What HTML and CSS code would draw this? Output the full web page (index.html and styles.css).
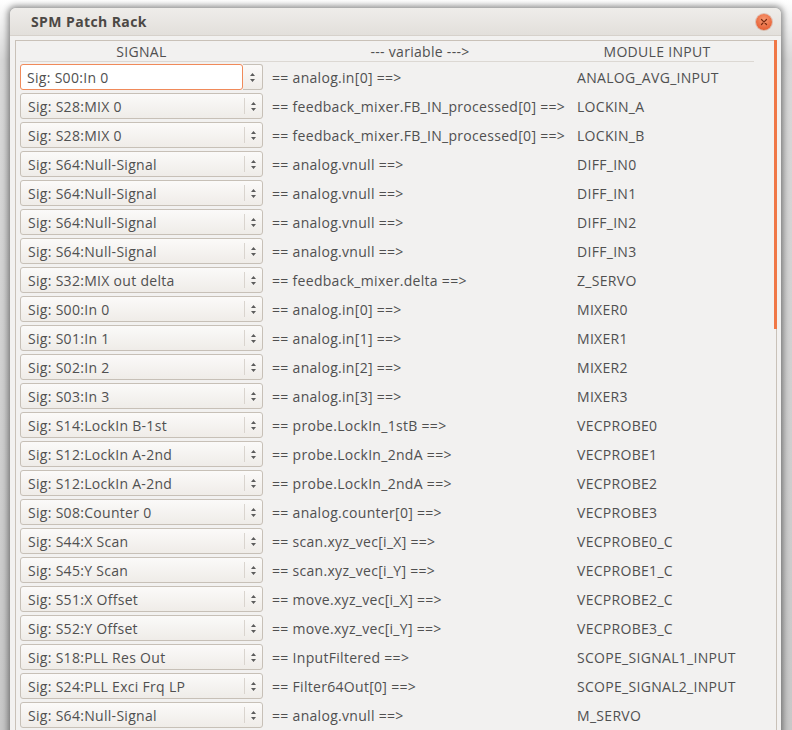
FILE: index.html
```html
<!DOCTYPE html>
<html>
<head>
<meta charset="utf-8">
<link rel="stylesheet" href="styles.css">
</head>
<body>
<div class="window">
  <div class="titlebar">
    <span class="title">SPM Patch Rack</span>
    <span class="close"><svg width="8" height="8" viewBox="0 0 8 8"><path d="M1.5 1.5 L6.5 6.5 M6.5 1.5 L1.5 6.5" stroke="#7a2a10" stroke-width="1.2" stroke-linecap="round"/></svg></span>
  </div>
  <div class="content">
    <div class="frame">
      <div class="scrollind"></div>
      <div class="header">
        <div class="h">SIGNAL</div>
        <div class="h">--- variable ---&gt;</div>
        <div class="h">MODULE INPUT</div>
      </div>
      <div class="rows" id="rows">
        <div class="combo focus"><span class="entry">Sig: S00:In 0</span><span class="spin"><svg width="7" height="11" viewBox="0 0 7 11"><path d="M3.5 1 L6 4 L1 4 Z M3.5 10 L6 7 L1 7 Z" fill="#5c5c5c"/></svg></span></div>
        <div class="var">== analog.in[0] ==&gt;</div><div class="mod">ANALOG_AVG_INPUT</div>

        <div class="combo"><span class="entry">Sig: S28:MIX 0</span><span class="spin"><svg width="7" height="11" viewBox="0 0 7 11"><path d="M3.5 1 L6 4 L1 4 Z M3.5 10 L6 7 L1 7 Z" fill="#5c5c5c"/></svg></span></div>
        <div class="var">== feedback_mixer.FB_IN_processed[0] ==&gt;</div><div class="mod">LOCKIN_A</div>

        <div class="combo"><span class="entry">Sig: S28:MIX 0</span><span class="spin"><svg width="7" height="11" viewBox="0 0 7 11"><path d="M3.5 1 L6 4 L1 4 Z M3.5 10 L6 7 L1 7 Z" fill="#5c5c5c"/></svg></span></div>
        <div class="var">== feedback_mixer.FB_IN_processed[0] ==&gt;</div><div class="mod">LOCKIN_B</div>

        <div class="combo"><span class="entry">Sig: S64:Null-Signal</span><span class="spin"><svg width="7" height="11" viewBox="0 0 7 11"><path d="M3.5 1 L6 4 L1 4 Z M3.5 10 L6 7 L1 7 Z" fill="#5c5c5c"/></svg></span></div>
        <div class="var">== analog.vnull ==&gt;</div><div class="mod">DIFF_IN0</div>

        <div class="combo"><span class="entry">Sig: S64:Null-Signal</span><span class="spin"><svg width="7" height="11" viewBox="0 0 7 11"><path d="M3.5 1 L6 4 L1 4 Z M3.5 10 L6 7 L1 7 Z" fill="#5c5c5c"/></svg></span></div>
        <div class="var">== analog.vnull ==&gt;</div><div class="mod">DIFF_IN1</div>

        <div class="combo"><span class="entry">Sig: S64:Null-Signal</span><span class="spin"><svg width="7" height="11" viewBox="0 0 7 11"><path d="M3.5 1 L6 4 L1 4 Z M3.5 10 L6 7 L1 7 Z" fill="#5c5c5c"/></svg></span></div>
        <div class="var">== analog.vnull ==&gt;</div><div class="mod">DIFF_IN2</div>

        <div class="combo"><span class="entry">Sig: S64:Null-Signal</span><span class="spin"><svg width="7" height="11" viewBox="0 0 7 11"><path d="M3.5 1 L6 4 L1 4 Z M3.5 10 L6 7 L1 7 Z" fill="#5c5c5c"/></svg></span></div>
        <div class="var">== analog.vnull ==&gt;</div><div class="mod">DIFF_IN3</div>

        <div class="combo"><span class="entry">Sig: S32:MIX out delta</span><span class="spin"><svg width="7" height="11" viewBox="0 0 7 11"><path d="M3.5 1 L6 4 L1 4 Z M3.5 10 L6 7 L1 7 Z" fill="#5c5c5c"/></svg></span></div>
        <div class="var">== feedback_mixer.delta ==&gt;</div><div class="mod">Z_SERVO</div>

        <div class="combo"><span class="entry">Sig: S00:In 0</span><span class="spin"><svg width="7" height="11" viewBox="0 0 7 11"><path d="M3.5 1 L6 4 L1 4 Z M3.5 10 L6 7 L1 7 Z" fill="#5c5c5c"/></svg></span></div>
        <div class="var">== analog.in[0] ==&gt;</div><div class="mod">MIXER0</div>

        <div class="combo"><span class="entry">Sig: S01:In 1</span><span class="spin"><svg width="7" height="11" viewBox="0 0 7 11"><path d="M3.5 1 L6 4 L1 4 Z M3.5 10 L6 7 L1 7 Z" fill="#5c5c5c"/></svg></span></div>
        <div class="var">== analog.in[1] ==&gt;</div><div class="mod">MIXER1</div>

        <div class="combo"><span class="entry">Sig: S02:In 2</span><span class="spin"><svg width="7" height="11" viewBox="0 0 7 11"><path d="M3.5 1 L6 4 L1 4 Z M3.5 10 L6 7 L1 7 Z" fill="#5c5c5c"/></svg></span></div>
        <div class="var">== analog.in[2] ==&gt;</div><div class="mod">MIXER2</div>

        <div class="combo"><span class="entry">Sig: S03:In 3</span><span class="spin"><svg width="7" height="11" viewBox="0 0 7 11"><path d="M3.5 1 L6 4 L1 4 Z M3.5 10 L6 7 L1 7 Z" fill="#5c5c5c"/></svg></span></div>
        <div class="var">== analog.in[3] ==&gt;</div><div class="mod">MIXER3</div>

        <div class="combo"><span class="entry">Sig: S14:LockIn B-1st</span><span class="spin"><svg width="7" height="11" viewBox="0 0 7 11"><path d="M3.5 1 L6 4 L1 4 Z M3.5 10 L6 7 L1 7 Z" fill="#5c5c5c"/></svg></span></div>
        <div class="var">== probe.LockIn_1stB ==&gt;</div><div class="mod">VECPROBE0</div>

        <div class="combo"><span class="entry">Sig: S12:LockIn A-2nd</span><span class="spin"><svg width="7" height="11" viewBox="0 0 7 11"><path d="M3.5 1 L6 4 L1 4 Z M3.5 10 L6 7 L1 7 Z" fill="#5c5c5c"/></svg></span></div>
        <div class="var">== probe.LockIn_2ndA ==&gt;</div><div class="mod">VECPROBE1</div>

        <div class="combo"><span class="entry">Sig: S12:LockIn A-2nd</span><span class="spin"><svg width="7" height="11" viewBox="0 0 7 11"><path d="M3.5 1 L6 4 L1 4 Z M3.5 10 L6 7 L1 7 Z" fill="#5c5c5c"/></svg></span></div>
        <div class="var">== probe.LockIn_2ndA ==&gt;</div><div class="mod">VECPROBE2</div>

        <div class="combo"><span class="entry">Sig: S08:Counter 0</span><span class="spin"><svg width="7" height="11" viewBox="0 0 7 11"><path d="M3.5 1 L6 4 L1 4 Z M3.5 10 L6 7 L1 7 Z" fill="#5c5c5c"/></svg></span></div>
        <div class="var">== analog.counter[0] ==&gt;</div><div class="mod">VECPROBE3</div>

        <div class="combo"><span class="entry">Sig: S44:X Scan</span><span class="spin"><svg width="7" height="11" viewBox="0 0 7 11"><path d="M3.5 1 L6 4 L1 4 Z M3.5 10 L6 7 L1 7 Z" fill="#5c5c5c"/></svg></span></div>
        <div class="var">== scan.xyz_vec[i_X] ==&gt;</div><div class="mod">VECPROBE0_C</div>

        <div class="combo"><span class="entry">Sig: S45:Y Scan</span><span class="spin"><svg width="7" height="11" viewBox="0 0 7 11"><path d="M3.5 1 L6 4 L1 4 Z M3.5 10 L6 7 L1 7 Z" fill="#5c5c5c"/></svg></span></div>
        <div class="var">== scan.xyz_vec[i_Y] ==&gt;</div><div class="mod">VECPROBE1_C</div>

        <div class="combo"><span class="entry">Sig: S51:X Offset</span><span class="spin"><svg width="7" height="11" viewBox="0 0 7 11"><path d="M3.5 1 L6 4 L1 4 Z M3.5 10 L6 7 L1 7 Z" fill="#5c5c5c"/></svg></span></div>
        <div class="var">== move.xyz_vec[i_X] ==&gt;</div><div class="mod">VECPROBE2_C</div>

        <div class="combo"><span class="entry">Sig: S52:Y Offset</span><span class="spin"><svg width="7" height="11" viewBox="0 0 7 11"><path d="M3.5 1 L6 4 L1 4 Z M3.5 10 L6 7 L1 7 Z" fill="#5c5c5c"/></svg></span></div>
        <div class="var">== move.xyz_vec[i_Y] ==&gt;</div><div class="mod">VECPROBE3_C</div>

        <div class="combo"><span class="entry">Sig: S18:PLL Res Out</span><span class="spin"><svg width="7" height="11" viewBox="0 0 7 11"><path d="M3.5 1 L6 4 L1 4 Z M3.5 10 L6 7 L1 7 Z" fill="#5c5c5c"/></svg></span></div>
        <div class="var">== InputFiltered ==&gt;</div><div class="mod">SCOPE_SIGNAL1_INPUT</div>

        <div class="combo"><span class="entry">Sig: S24:PLL Exci Frq LP</span><span class="spin"><svg width="7" height="11" viewBox="0 0 7 11"><path d="M3.5 1 L6 4 L1 4 Z M3.5 10 L6 7 L1 7 Z" fill="#5c5c5c"/></svg></span></div>
        <div class="var">== Filter64Out[0] ==&gt;</div><div class="mod">SCOPE_SIGNAL2_INPUT</div>

        <div class="combo"><span class="entry">Sig: S64:Null-Signal</span><span class="spin"><svg width="7" height="11" viewBox="0 0 7 11"><path d="M3.5 1 L6 4 L1 4 Z M3.5 10 L6 7 L1 7 Z" fill="#5c5c5c"/></svg></span></div>
        <div class="var">== analog.vnull ==&gt;</div><div class="mod">M_SERVO</div>
      </div>
    </div>
  </div>
</div>
</body>
</html>
```
FILE: styles.css
```css
html, body {
  margin: 0;
  padding: 0;
  height: 730px;
  overflow: hidden;
}
body {
  background: linear-gradient(to bottom, #ffffff 0, #d8d8d8 60px, #c8c8c8 100%);
  padding: 8px 11px 0 10px;
  box-sizing: border-box;
  font-family: "Open Sans", "DejaVu Sans", sans-serif;
  font-size: 14px;
  letter-spacing: 0.3px;
  color: #505050;
}
.window {
  background: #f2f1f0;
  border-radius: 6px 6px 0 0;
  height: 740px;
  box-shadow: 0 0 6px 2px rgba(0, 0, 0, 0.45);
  overflow: hidden;
}
.titlebar {
  height: 27px;
  display: flex;
  align-items: center;
  justify-content: space-between;
  padding: 0 9px 0 21px;
  background: linear-gradient(to bottom, #efedea, #e2dfdb);
  border-bottom: 1px solid #d6d1cb;
}
.title {
  font-weight: bold;
  font-size: 14px;
  letter-spacing: 0.4px;
  color: #4c4845;
}
.close {
  width: 16px;
  height: 16px;
  border-radius: 50%;
  background: radial-gradient(circle at 50% 35%, #f89a73, #e8653a 70%, #d25427);
  box-shadow: 0 0 0 1px rgba(180, 70, 30, 0.25);
  display: flex;
  align-items: center;
  justify-content: center;
}
.content {
  padding: 4px 4px 0 5px;
}
.frame {
  position: relative;
  border: 1px solid #c9c1b8;
  border-bottom: none;
  height: 720px;
  padding: 0 22px 0 4px;
}
.scrollind {
  position: absolute;
  right: -1px;
  top: -1px;
  width: 3px;
  height: 289px;
  background: #f07746;
}
.header {
  display: grid;
  grid-template-columns: 243px 296px 160px;
  column-gap: 9px;
  height: 20px;
  align-items: center;
  border-bottom: 1px solid #dcd8d3;
}
.h {
  text-align: center;
}
.rows {
  display: grid;
  grid-template-columns: 243px 296px 160px;
  column-gap: 9px;
  grid-auto-rows: 26px;
  row-gap: 3px;
  padding-top: 2px;
  align-items: center;
}
.combo {
  height: 26px;
  box-sizing: border-box;
  display: flex;
  border: 1px solid #c7c0b7;
  border-radius: 3px;
  background: linear-gradient(to bottom, #fbfaf9, #efece8);
}
.entry {
  flex: 1;
  display: flex;
  align-items: center;
  padding-left: 7px;
  white-space: nowrap;
}
.spin {
  width: 18px;
  display: flex;
  align-items: center;
  justify-content: center;
  position: relative;
}
.spin::before {
  content: "";
  position: absolute;
  left: 0;
  top: 4px;
  bottom: 4px;
  width: 1px;
  background: #d9d4ce;
}
.combo.focus {
  border: none;
  background: none;
}
.combo.focus .entry {
  border: 1px solid #f08a5a;
  border-radius: 3px;
  background: #ffffff;
  padding-left: 6px;
}
.combo.focus .spin {
  width: 19px;
  border: 1px solid #c7c0b7;
  border-left: none;
  border-radius: 0 3px 3px 0;
  background: linear-gradient(to bottom, #fbfaf9, #efece8);
}
.combo.focus .spin::before {
  display: none;
}
.var, .mod {
  white-space: nowrap;
}
```
